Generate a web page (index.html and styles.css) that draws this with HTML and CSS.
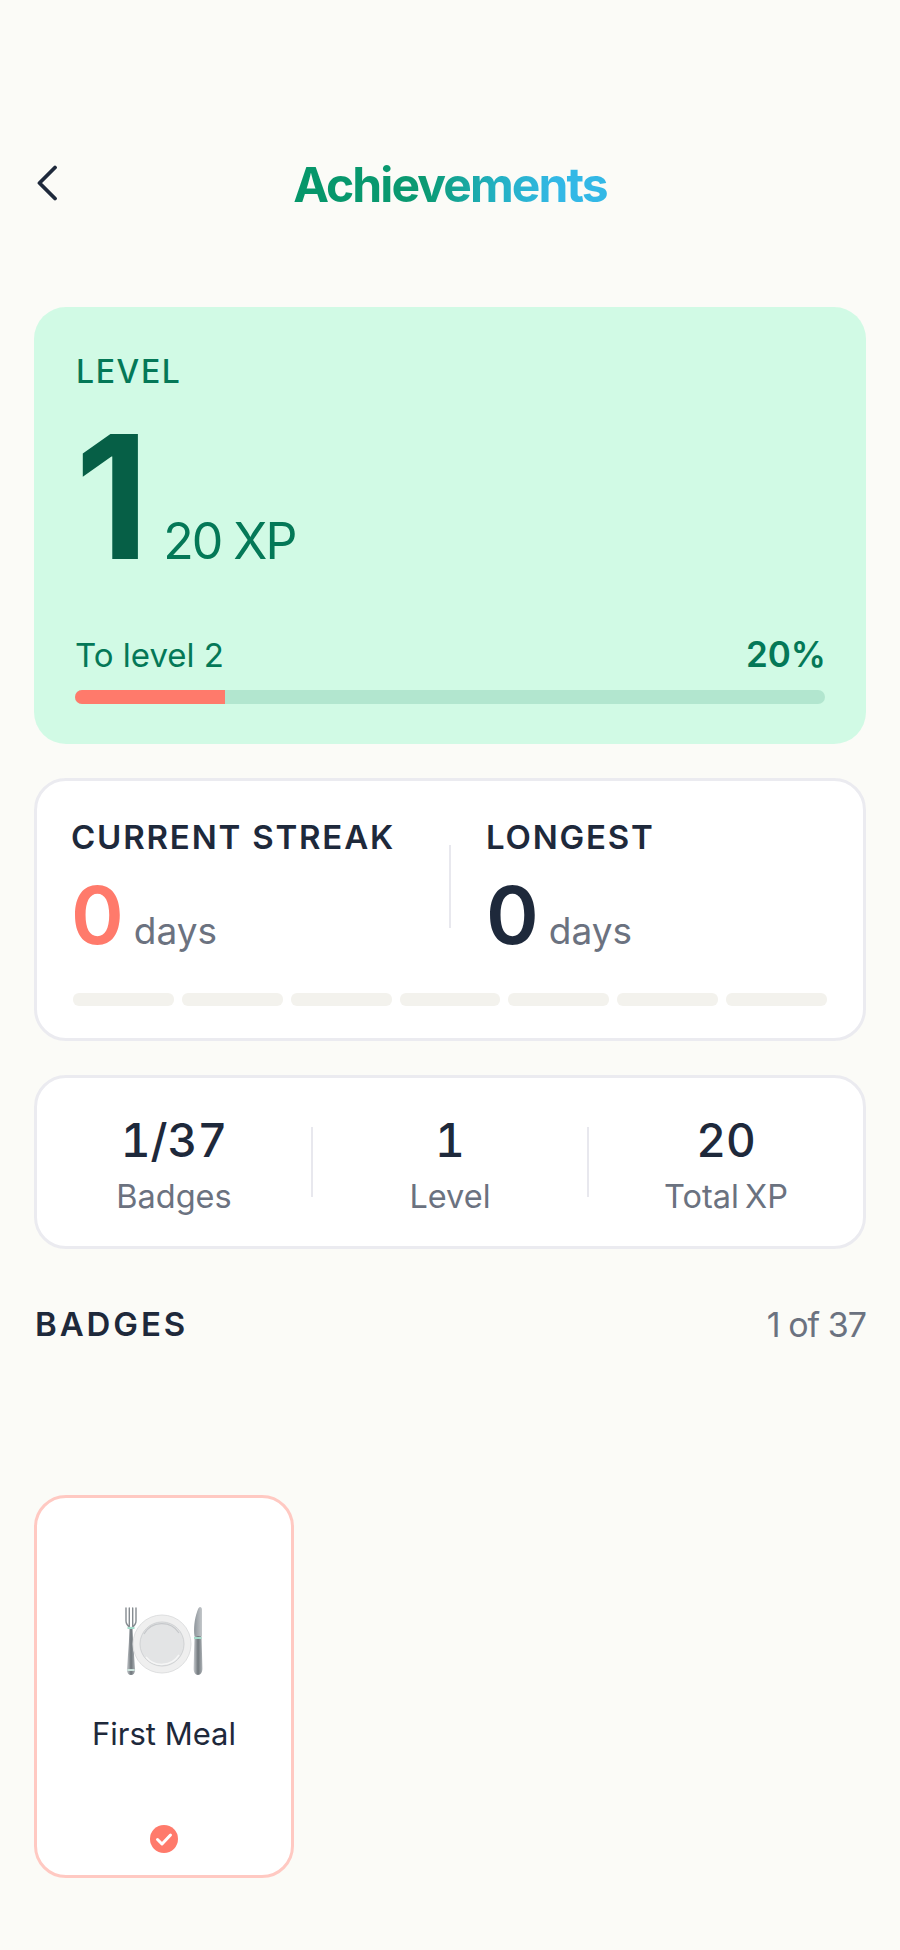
FILE: index.html
```html
<!DOCTYPE html>
<html lang="en">
<head>
    <meta charset="UTF-8">
    <title>Achievements</title>
    <link rel="stylesheet" href="styles.css">
</head>
<body>
    <div class="page">
        <header class="top-bar">
            <svg class="back-icon" viewBox="0 0 22 36" width="22" height="36">
                <path d="M19 2.500 3.500 18 19 33.500" fill="none" stroke="#1e293b" stroke-width="3.800" stroke-linecap="round" stroke-linejoin="round"/>
            </svg>
            <h1 class="title">Achievements</h1>
        </header>

        <section class="level-card">
            <div class="level-label">LEVEL</div>
            <div class="level-row">
                <span class="level-num">1</span>
                <span class="level-xp">20 XP</span>
            </div>
            <div class="progress-row">
                <span>To level 2</span>
                <span class="progress-pct">20%</span>
            </div>
            <div class="progress-track">
                <div class="progress-fill" style="width: 20%;"></div>
            </div>
        </section>

        <section class="card streak-card">
            <div class="streak-cols">
                <div class="streak-col">
                    <div class="streak-label">CURRENT STREAK</div>
                    <div class="streak-value"><span class="streak-num coral">0</span><span class="streak-unit">days</span></div>
                </div>
                <div class="streak-divider"></div>
                <div class="streak-col">
                    <div class="streak-label">LONGEST</div>
                    <div class="streak-value"><span class="streak-num">0</span><span class="streak-unit">days</span></div>
                </div>
            </div>
            <div class="week-bar">
                <span></span><span></span><span></span><span></span><span></span><span></span><span></span>
            </div>
        </section>

        <section class="card stats-card">
            <div class="stat">
                <div class="stat-num">1/37</div>
                <div class="stat-label">Badges</div>
            </div>
            <div class="stat-divider"></div>
            <div class="stat">
                <div class="stat-num">1</div>
                <div class="stat-label">Level</div>
            </div>
            <div class="stat-divider"></div>
            <div class="stat">
                <div class="stat-num">20</div>
                <div class="stat-label">Total XP</div>
            </div>
        </section>

        <div class="section-head">
            <h2 class="section-title">BADGES</h2>
            <span class="section-count">1 of 37</span>
        </div>

        <div class="badge-grid">
            <div class="badge">
                <svg class="badge-icon" viewBox="0 0 78 70" width="78" height="70">
                    <defs>
                        <linearGradient id="metal" x1="0" y1="0" x2="1" y2="0">
                            <stop offset="0" stop-color="#c9ccd0"/>
                            <stop offset=".5" stop-color="#6f767b"/>
                            <stop offset="1" stop-color="#aeb3b7"/>
                        </linearGradient>
                        <linearGradient id="blade" x1="0" y1="0" x2="1" y2="0">
                            <stop offset="0" stop-color="#8e959b"/>
                            <stop offset="1" stop-color="#c3c7ca"/>
                        </linearGradient>
                    </defs>
                    <!-- вилица -->
                    <path d="M1 1v13c0 3 2 5 4 6.500M4.300 1v18M7.700 1v18M11 1v13c0 3-2 5-4 6.500" fill="none" stroke="#868c91" stroke-width="1.400" stroke-linecap="round"/>
                    <path d="M4.500 21h3l.6 14 2 28c0 3-1.800 5-4.100 5s-4.100-2-4.100-5l2-28z" fill="url(#metal)"/>
                    <path d="M2.500 21h7" stroke="#a5dccb" stroke-width="2"/>
                    <path d="M2.300 63h7.400" stroke="#cfe5df" stroke-width="2"/>
                    <!-- чиния -->
                    <circle cx="37" cy="37" r="29" fill="#efefef" stroke="#dedfe0"/>
                    <circle cx="37" cy="37" r="22" fill="#e3e4e5" stroke="#d0d2d4" stroke-width="1"/>
                    <path d="M19 27a20.500 20.500 0 0 1 35-1" fill="none" stroke="#c6c8cb" stroke-width="1.200"/>
                    <path d="M21 50a20.500 20.500 0 0 0 33-2" fill="none" stroke="#f6f6f6" stroke-width="1.500"/>
                    <!-- нож -->
                    <path d="M75 0c1.200 0 2 1 2 2.500V29h-7.500c-1-7 0-17 2.500-24 .7-2.500 1.800-5 3-5z" fill="url(#blade)"/>
                    <path d="M69.500 29h7l.9 32c.2 4-1.600 7-4.400 7s-4.600-3-4.400-7z" fill="url(#metal)"/>
                    <path d="M69 31h7.500" stroke="#a5dccb" stroke-width="2"/>
                </svg>
                <div class="badge-name">First Meal</div>
                <svg class="badge-check" viewBox="0 0 28 28" width="28" height="28">
                    <circle cx="14" cy="14" r="14" fill="#ff7a6b"/>
                    <path d="M7.500 14.500 12 19l8.500-9" fill="none" stroke="#fff" stroke-width="3" stroke-linecap="round" stroke-linejoin="round"/>
                </svg>
            </div>
        </div>
    </div>
</body>
</html>
```

FILE: styles.css
```css
/* Общи стилове */
body {
    font-family: Inter, 'Noto Sans', sans-serif;
    background-color: #fbfbf7;
    color: #1e293b;
    margin: 0;
}

.page {
    height: 1950px;
    padding: 0 34px;
    box-sizing: border-box;
    overflow: hidden;
}

/* Горна лента */
.top-bar {
    display: grid;
    grid-template-columns: 1fr auto 1fr;
    align-items: center;
    padding-top: 160px;
    height: 50px;
    margin-bottom: 97px;
}

.back-icon {
    margin-left: 2px;
    margin-top: -5px;
}

.title {
    margin: 0;
    font-size: 48px;
    font-weight: 700;
    letter-spacing: -1.9px;
    line-height: 50px;
    background: linear-gradient(90deg, #059669 0%, #0b9a72 42%, #22b0c0 64%, #33b8e6 84%);
    -webkit-background-clip: text;
    background-clip: text;
    color: transparent;
}

/* Карта за ниво */
.level-card {
    height: 437px;
    box-sizing: border-box;
    padding: 47px 41px 0;
    background-color: #d1fae5;
    border-radius: 32px;
    color: #047857;
    margin-bottom: 34px;
}

.level-label {
    font-size: 32px;
    font-weight: 500;
    letter-spacing: 1.600px;
    line-height: 36px;
    margin-left: 1px;
}

.level-row {
    display: flex;
    align-items: baseline;
    gap: 14px;
    height: 202px;
    margin-top: 5px;
}

.level-num {
    font-size: 172px;
    font-weight: 700;
    line-height: 202px;
    color: #065f46;
}

.level-xp {
    font-size: 50px;
    font-weight: 400;
    letter-spacing: -2px;
}

.progress-row {
    display: flex;
    justify-content: space-between;
    align-items: baseline;
    font-size: 33px;
    line-height: 42px;
    margin-top: 36px;
}

.progress-pct {
    font-size: 35px;
    font-weight: 600;
    margin-right: -1px;
}

.progress-track {
    height: 14px;
    margin-top: 14px;
    background-color: #b2e6cf;
    border-radius: 7px;
    overflow: hidden;
}

.progress-fill {
    height: 100%;
    background-color: #ff7a6b;
}

/* Карти */
.card {
    background: white;
    border: 3px solid #ebebf0;
    border-radius: 32px;
    box-sizing: border-box;
}

.streak-card {
    height: 263px;
    padding: 36px 36px 0;
    margin-bottom: 34px;
}

.streak-cols {
    display: flex;
    align-items: flex-start;
    margin-left: -2px;
}

.streak-col {
    flex: 0 0 auto;
}

.streak-col:first-child {
    width: 378px;
}

.streak-divider {
    width: 2px;
    height: 83px;
    margin-top: 28px;
    margin-right: 35px;
    background-color: #e8e8ee;
}

.streak-label {
    font-size: 33px;
    font-weight: 600;
    letter-spacing: 1.800px;
    line-height: 40px;
}

.streak-value {
    display: flex;
    align-items: baseline;
    gap: 10px;
    margin-top: 13px;
}

.streak-num {
    font-size: 80px;
    font-weight: 600;
    line-height: 90px;
}

.coral {
    color: #ff7a6b;
}

.streak-unit {
    font-size: 37px;
    color: #6b7280;
}

.week-bar {
    display: flex;
    gap: 8px;
    margin-top: 33px;
}

.week-bar span {
    flex: 1;
    height: 13px;
    background-color: #f3f2ed;
    border-radius: 6px;
}

/* Статистика */
.stats-card {
    display: flex;
    align-items: center;
    height: 174px;
    margin-bottom: 55px;
}

.stat {
    flex: 1;
    text-align: center;
    padding-top: 5px;
}

.stat-divider {
    width: 2px;
    height: 70px;
    background-color: #e8e8ee;
}

.stat-num {
    font-size: 46px;
    font-weight: 550;
    line-height: 54px;
    font-feature-settings: "tnum";
}

.stat-label {
    font-size: 32.500px;
    word-spacing: -3px;
    color: #6b7280;
    line-height: 40px;
    margin-top: 10px;
}

/* Значки */
.section-head {
    display: flex;
    justify-content: space-between;
    align-items: center;
    height: 40px;
    margin-bottom: 151px;
}

.section-title {
    margin: 0 0 0 1px;
    font-size: 33px;
    font-weight: 600;
    letter-spacing: 2.900px;
}

.section-count {
    font-size: 34px;
    letter-spacing: -1px;
    color: #6b7280;
}

.badge-grid {
    display: grid;
    grid-template-columns: repeat(3, 1fr);
    gap: 26px;
}

.badge {
    display: flex;
    flex-direction: column;
    align-items: center;
    height: 383px;
    box-sizing: border-box;
    padding-top: 109px;
    background: white;
    border: 3px solid #ffc9c2;
    border-radius: 32px;
}

.badge-name {
    font-size: 31px;
    font-weight: 400;
    line-height: 38px;
    margin-top: 38px;
}

.badge-check {
    margin-top: 72px;
}
```
